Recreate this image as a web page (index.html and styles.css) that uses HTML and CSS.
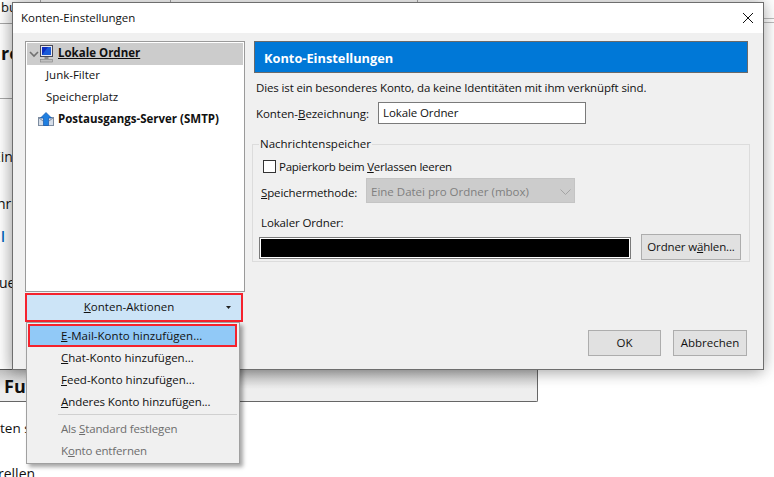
FILE: index.html
```html
<!DOCTYPE html>
<html lang="de">
<head>
<meta charset="utf-8">
<title>Konten-Einstellungen</title>
<link rel="stylesheet" href="styles.css">
</head>
<body>
<div class="behind">
  <div class="behind-tab">bu</div>
  <div class="behind-line line-a"></div>
  <div class="behind-line line-b"></div>
  <div class="behind-top top-a"></div>
  <div class="behind-top top-b"></div>
  <div class="behind-top top-c"></div>
  <div class="behind-head">re</div>
  <div class="behind-text t1">Ein</div>
  <div class="behind-text t2">hri</div>
  <div class="behind-text t3">l</div>
  <div class="behind-text t4">ue</div>
  <div class="behind-panel"><span class="behind-fu">Fur</span></div>
  <div class="behind-text t5">ten s</div>
  <div class="behind-text t6">rellen</div>
  <div class="rule-right"></div>
</div>

<div class="dialog">
  <header class="titlebar">
    <span class="title-text">Konten-Einstellungen</span>
    <svg class="close" width="12" height="12" viewBox="0 0 12 12"><path d="M1 1l10 10M11 1L1 11" stroke="#111" stroke-width="1" fill="none"/></svg>
  </header>
  <div class="content">
    <aside class="left">
      <div class="tree">
        <div class="tree-row selected">
          <svg class="twisty" width="10" height="7" viewBox="0 0 10 7"><path d="M1 1l4 4 4-4" stroke="#707070" stroke-width="1.600" fill="none"/></svg>
          <svg class="acct-icon" width="15" height="18" viewBox="0 0 15 18">
            <rect x="1.500" y="0.500" width="12" height="11" fill="#e8e8ee" stroke="#4a4a58"/>
            <rect x="3" y="2" width="9" height="8" fill="#0c2cc0"/>
            <path d="M3 10l6-8h3v8z" fill="#1a5ad8"/>
            <rect x="5.500" y="12" width="4" height="2" fill="#8a8a8a"/>
            <rect x="1.500" y="14.500" width="12" height="2.500" fill="#c0c0c0" stroke="#808080" stroke-width="0.600"/>
          </svg>
          <span class="strong-u row-text">Lokale Ordner</span>
        </div>
        <div class="tree-row child"><span class="row-text">Junk-Filter</span></div>
        <div class="tree-row child"><span class="row-text">Speicherplatz</span></div>
        <div class="tree-row">
          <svg class="twisty" width="9" height="7"></svg>
          <svg class="acct-icon smtp" width="16" height="14" viewBox="0 0 16 14">
            <rect x="0.500" y="5.500" width="15" height="8" fill="#d5dde8" stroke="#7d8ca0"/>
            <path d="M1 6l4 3M15 6l-4 3" stroke="#7d8ca0" fill="none"/>
            <path d="M8 0.500L2.500 6H5.500V13.500H10.500V6H13.500z" fill="#1f7fe0" stroke="#1258b0" stroke-width="0.700"/>
          </svg>
          <strong class="row-text">Postausgangs-Server (SMTP)</strong>
        </div>
      </div>
      <button class="actions" type="button">
        <span class="actions-label"><u>K</u>onten-Aktionen</span>
        <svg class="caret" width="5" height="3" viewBox="0 0 5 3"><path d="M0 0h5L2.500 3z" fill="#222"/></svg>
      </button>
    </aside>
    <main class="right">
      <h1 class="banner">Konto-Einstellungen</h1>
      <p class="note">Dies ist ein besonderes Konto, da keine Identitäten mit ihm verknüpft sind.</p>
      <div class="name-row">
        <label class="name-label">Konten-<u>B</u>ezeichnung:</label>
        <div class="textbox">Lokale Ordner</div>
      </div>
      <fieldset class="store">
        <legend>Nachrichtenspeicher</legend>
        <div class="check-row"><span class="checkbox"></span><span class="check-text">Papierkorb beim <u>V</u>erlassen leeren</span></div>
        <div class="method-row">
          <span class="method-label"><u>S</u>peichermethode:</span>
          <div class="select">
            <span>Eine Datei pro Ordner (mbox)</span>
            <svg width="11" height="6" viewBox="0 0 11 6"><path d="M0.500 0.500l5 5 5-5" stroke="#a4a4a4" fill="none"/></svg>
          </div>
        </div>
        <div class="folder-label">Lokaler Ordner:</div>
        <div class="folder-row">
          <div class="folder-path"></div>
          <button class="btn btn-folder" type="button">Ordner w<u>ä</u>hlen...</button>
        </div>
      </fieldset>
      <div class="footer">
        <button class="btn btn-ok" type="button">OK</button>
        <button class="btn btn-cancel" type="button">Abbrechen</button>
      </div>
    </main>
  </div>
</div>

<div class="menu">
  <div class="menu-item active"><u>E</u>-Mail-Konto hinzufügen...</div>
  <div class="menu-item"><u>C</u>hat-Konto hinzufügen...</div>
  <div class="menu-item"><u>F</u>eed-Konto hinzufügen...</div>
  <div class="menu-item item-other"><u>A</u>nderes Konto hinzufügen...</div>
  <div class="menu-sep"></div>
  <div class="menu-item disabled">Als <u>S</u>tandard festlegen</div>
  <div class="menu-item disabled">K<u>o</u>nto entfernen</div>
</div>
</body>
</html>
```

FILE: styles.css
```css
* { box-sizing: border-box; }
html, body { margin: 0; height: 100%; }
body {
  width: 774px;
  height: 477px;
  position: relative;
  overflow: hidden;
  background: #fff;
  font-family: "Open Sans", "Noto Sans", sans-serif;
  font-size: 11.500px;
  color: #111;
}
u { text-underline-offset: 1px; text-decoration-thickness: 1px; }

/* window behind the dialog */
.behind { position: absolute; inset: 0; }
.behind > * { position: absolute; white-space: nowrap; }
.behind-tab { left: 1px; top: -2px; font-size: 13px; }
.behind-line { left: 0; width: 12px; height: 1px; background: #a8a8a8; }
.line-a { top: 23px; }
.line-b { top: 98px; }
.behind-top { top: 0; width: 1px; height: 3px; background: #aaa; }
.top-a { left: 40px; }
.top-b { left: 170px; }
.top-c { left: 417px; }
.behind-head { left: 1px; top: 42px; font-size: 18px; font-weight: 700; line-height: 22px; }
.behind-text { font-size: 14px; line-height: 18px; }
.t1 { left: -7px; top: 148px; }
.t2 { left: -3px; top: 195px; }
.t3 { left: 1px; top: 228px; color: #0067c0; font-weight: 600; }
.t4 { left: -1px; top: 274px; }
.behind-panel {
  left: 0; top: 369px; width: 538px; height: 33px;
  background: linear-gradient(#c4c4c4, #eeeeee 62%);
  border-top: 1px solid #555;
  border-right: 1px solid #666;
  border-bottom: 1px solid #666;
  border-bottom-right-radius: 2px;
}
.behind-fu { position: absolute; left: 4px; top: 5px; font-size: 18px; font-weight: 700; line-height: 22px; }
.t5 { left: 0; top: 419px; font-size: 13.500px; }
.t6 { left: -2px; top: 465px; }
.rule-right { left: 764px; top: 18px; width: 10px; height: 5px; border-top: 1px solid #bbb; border-bottom: 1px solid #bbb; }

/* dialog */
.dialog {
  position: absolute;
  left: 12px;
  top: 2px;
  width: 752px;
  height: 368px;
  background: #f0f0f0;
  border: 1px solid #6e6e6e;
  box-shadow: 0 0 16px rgba(0, 0, 0, .3), -3px 4px 12px rgba(0, 0, 0, .12);
  display: flex;
  flex-direction: column;
}
.titlebar {
  height: 30px;
  flex: none;
  background: #fff;
  display: flex;
  align-items: center;
  justify-content: space-between;
  padding: 0 9px 0 8px;
}
.title-text { margin-top: -2px; }
.content {
  flex: 1;
  display: flex;
  padding: 8px 15px 13px 12px;
  gap: 9px;
  min-height: 0;
}
.left { width: 220px; flex: none; display: flex; flex-direction: column; }
.tree {
  height: 251px;
  background: #fff;
  border: 1px solid #9a9a9a;
  padding: 1px;
}
.tree-row {
  height: 22px;
  display: flex;
  align-items: center;
  padding-left: 2px;
  white-space: nowrap;
}
.row-text { margin-top: -3px; }
.tree-row.selected { background: #ccc; }
.tree-row.child { padding-left: 19px; }
.twisty { flex: none; }
.acct-icon { flex: none; margin-right: 4px; }
.acct-icon.smtp { margin-top: -2px; }
strong, .strong-u { font-weight: 700; }
.strong-u { text-decoration: underline; text-underline-offset: 1px; }
.actions {
  margin-top: 1px;
  width: 218px;
  height: 29px;
  background: #cce4f7;
  border: 2px solid #f5222d;
  font: inherit;
  color: inherit;
  padding: 0 0 2px;
  position: relative;
  display: flex;
  align-items: center;
  justify-content: center;
}
.actions-label { transform: translateX(-5px); letter-spacing: .03px; }
.caret { position: absolute; right: 10px; top: 11px; }

.right { flex: 1; display: flex; flex-direction: column; min-width: 0; }
.banner {
  margin: 0;
  height: 32px;
  flex: none;
  background: #0078d7;
  border: 1px solid #6a6a6a;
  color: #fff;
  font-size: 12.800px;
  font-weight: 700;
  line-height: 33px;
  padding-left: 9px;
}
.note { margin: 7px 0 0 2px; line-height: 15px; letter-spacing: -.13px; }
.name-row { display: flex; align-items: center; margin: 7px 0 0 2px; }
.name-label { width: 122px; flex: none; letter-spacing: -.05px; }
.textbox {
  width: 208px;
  height: 22px;
  background: #fff;
  border: 1px solid #7a7a7a;
  line-height: 20px;
  padding-left: 4px;
  letter-spacing: -.1px;
}
.store {
  margin: 12px 0 0 -2px;
  width: 498px;
  height: 126px;
  border: 1px solid #dcdcdc;
  padding: 0 8px 0 7px;
  min-width: 0;
  flex: none;
}
.store legend { padding: 0 1px; margin-left: -1px; line-height: 16px; }
.check-row { display: flex; align-items: center; gap: 3px; margin: 5px 0 0 3px; height: 18px; }
.check-text { letter-spacing: -.25px; }
.checkbox { width: 13px; height: 13px; background: #fff; border: 1px solid #333; flex: none; }
.method-row { display: flex; align-items: center; margin: 3px 0 0 1px; height: 25px; }
.method-label { width: 105px; flex: none; padding-top: 3px; letter-spacing: -.12px; }
.select {
  width: 209px;
  height: 25px;
  background: #ccc;
  color: #7f7f7f;
  border: 1px solid #c4c4c4;
  display: flex;
  align-items: center;
  justify-content: space-between;
  padding: 2px 3px 0 4px;
}
.folder-label { margin: 12px 0 0 1px; line-height: 16px; letter-spacing: -.12px; }
.folder-row { display: flex; align-items: flex-start; margin-top: 3px; gap: 10px; }
.folder-path {
  margin: 3px 0 0 -1px;
  width: 372px;
  height: 22px;
  background: #000;
  border: 1px solid #7a7a7a;
  box-shadow: inset 0 0 0 1px #fff;
}
.btn {
  background: #e1e1e1;
  border: 1px solid #adadad;
  font: inherit;
  color: inherit;
  padding: 0 0 2px;
  height: 26px;
}
.btn-folder { width: 100px; letter-spacing: -.15px; }
.footer { margin-top: auto; display: flex; justify-content: flex-end; gap: 12px; padding-right: 1px; }
.btn-ok { width: 73px; }
.btn-cancel { width: 74px; }

/* popup menu, lies over the dialog */
.menu {
  position: absolute;
  left: 26px;
  top: 322px;
  width: 214px;
  height: 142px;
  background: #f0f0f0;
  border: 1px solid #a0a0a0;
  box-shadow: 3px 3px 4px rgba(0, 0, 0, .35);
  padding: 1px 2px 0 1px;
}
.menu-item {
  height: 22px;
  line-height: 22px;
  padding-left: 33px;
  white-space: nowrap;
}
.menu-item.active {
  height: 23px;
  background: #91c9f7;
  border: 2px solid #f5222d;
  line-height: 19px;
  padding-left: 31px;
  letter-spacing: .03px;
}
.menu-item.item-other { letter-spacing: -.08px; }
.menu-item.disabled { color: #6d6d6d; letter-spacing: -.15px; }
.menu-sep { height: 1px; background: #d0d0d0; margin: 1px 0 3px 30px; }
```
